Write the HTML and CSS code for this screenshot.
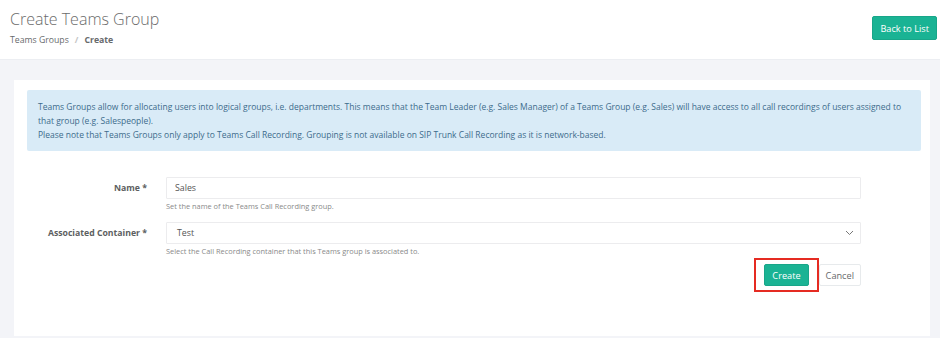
FILE: index.html
```html
<!DOCTYPE html>
<html lang="en">
<head>
    <link rel="stylesheet" href="styles.css">
    <title>Create Teams Group</title>
</head>
<body>
<div class="page-heading">
    <div>
        <h2>Create Teams Group</h2>
        <ol class="breadcrumb">
            <li>Teams Groups</li>
            <li class="active">Create</li>
        </ol>
    </div>
    <a class="btn btn-primary" href="#">Back to List</a>
</div>

<div class="wrapper">
    <div class="card">
        <div class="alert-info">
            <p>Teams Groups allow for allocating users into logical groups, i.e. departments. This means that the Team Leader (e.g. Sales Manager) of a Teams Group (e.g. Sales) will have access to all call recordings of users assigned to that group (e.g. Salespeople).</p>
            <p>Please note that Teams Groups only apply to Teams Call Recording. Grouping is not available on SIP Trunk Call Recording as it is network-based.</p>
        </div>

        <form class="form-horizontal">
            <div class="form-group">
                <label for="name">Name *</label>
                <div>
                    <input id="name" class="form-control" type="text" value="Sales">
                    <span class="help-block">Set the name of the Teams Call Recording group.</span>
                </div>
            </div>
            <div class="form-group">
                <label for="container">Associated Container *</label>
                <div>
                    <div class="form-control select">
                        <span>Test</span>
                        <svg width="9" height="6" viewBox="0 0 9 6"><path d="M1 1l3.5 3.5L8 1" fill="none" stroke="#777" stroke-width="1"/></svg>
                    </div>
                    <span class="help-block">Select the Call Recording container that this Teams group is associated to.</span>
                </div>
            </div>
            <div class="form-actions">
                <span class="highlight"><button class="btn btn-primary" type="button">Create</button></span>
                <button class="btn btn-white" type="button">Cancel</button>
            </div>
        </form>
    </div>
</div>
</body>
</html>
```
FILE: styles.css
```css
body {
    margin: 0;
    font-family: "Open Sans", "Liberation Sans", sans-serif;
    color: #676a6c;
    background-color: #f3f4f8;
}

.page-heading {
    background-color: white;
    height: 59px;
    padding: 0 3px 0 10px;
    display: flex;
    justify-content: space-between;
    align-items: flex-start;
    border-bottom: 1px solid #eceef2;
}

.page-heading h2 {
    margin: 8px 0 0 0;
    font-size: 16px;
    font-weight: 300;
    line-height: 22px;
    color: #6b6b6b;
}

.breadcrumb {
    list-style: none;
    margin: 4px 0 0 0;
    padding: 0;
    display: flex;
    font-size: 8.7px;
    color: #676a6c;
}

.breadcrumb li + li::before {
    content: "/";
    color: #c4c4c4;
    padding: 0 6px;
}

.breadcrumb .active {
    font-weight: 700;
}

.btn {
    font-family: inherit;
    font-size: 9.2px;
    border-radius: 2px;
    height: 22px;
    padding: 0 6px;
    display: inline-flex;
    align-items: center;
    text-decoration: none;
    cursor: pointer;
}

.btn-primary {
    background-color: #1ab394;
    border: 1px solid #18a689;
    color: white;
}

.page-heading .btn-primary {
    margin-top: 16px;
    padding: 0 7px;
}

.btn-white {
    background-color: white;
    border: 1px solid #e7eaec;
    color: #676a6c;
}

.wrapper {
    padding: 20px 10px 3px 14px;
}

.card {
    background-color: white;
    padding: 10px 9px 44px 13px;
}

.alert-info {
    background-color: #d9ebf7;
    color: #3d6b8c;
    border-radius: 2px;
    padding: 10px 11px 9px 11px;
    font-size: 8.5px;
    line-height: 14px;
}

.alert-info p {
    margin: 0;
}

.form-horizontal {
    margin-top: 26px;
    margin-right: 60px;
}

.form-group {
    display: grid;
    grid-template-columns: 120px 1fr;
    column-gap: 19px;
    margin-bottom: 11px;
}

.form-group label {
    text-align: right;
    font-size: 8.7px;
    font-weight: 700;
    color: #5d5f61;
    line-height: 22px;
}

.form-control {
    box-sizing: border-box;
    width: 100%;
    height: 22px;
    border: 1px solid #ececee;
    border-radius: 1px;
    padding: 0 8px;
    font-family: inherit;
    font-size: 8.8px;
    color: #555;
    display: block;
}

.select {
    display: flex;
    justify-content: space-between;
    align-items: center;
    padding: 0 6px 0 10px;
}

.help-block {
    display: block;
    margin-top: 2px;
    font-size: 7.4px;
    color: #8a8a8a;
    line-height: 10px;
}

.form-actions {
    display: flex;
    justify-content: flex-end;
    align-items: center;
    margin-top: -9px;
}

.highlight {
    display: inline-flex;
    border: 2px solid #e52b22;
    padding: 4px 8px;
}

.form-actions .btn {
    padding: 0 7px;
}

.form-actions .btn-white {
    padding: 0 6px;
}
```
